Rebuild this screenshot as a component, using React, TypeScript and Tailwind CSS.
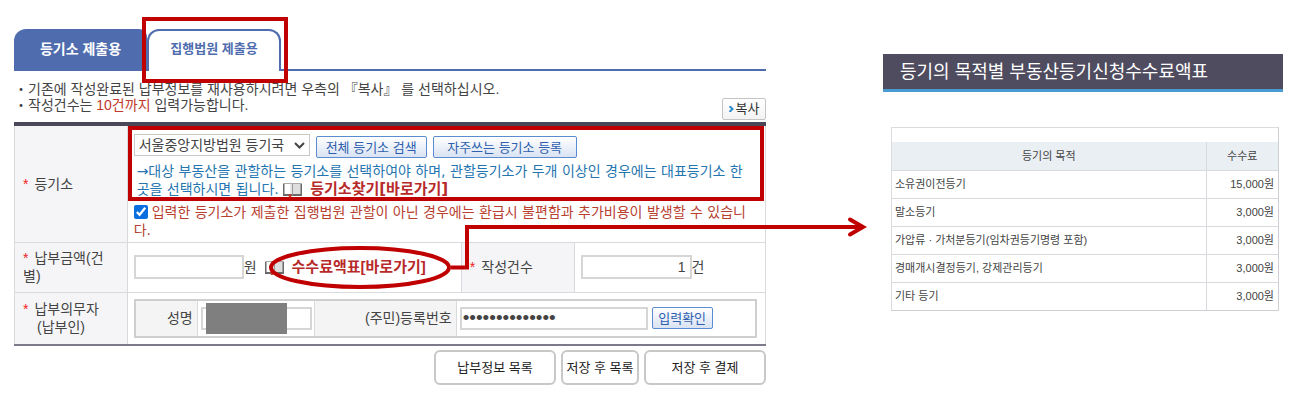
import { type ReactNode } from "react";

function Book() {
  return (
    <svg className="mr-2 inline-block h-[14px] w-[19px] align-[-3px]" viewBox="0 0 19 14" aria-hidden="true">
      <path d="M0 .5h19v12.500H0z" fill="#6a6a6a" />
      <path d="M1.500 1h7.500v10H1.500z" fill="#fff" />
      <path d="M10 1h7.500v10H10z" fill="#dedede" />
      <path d="M7 1h2v10H7z" fill="#e6e6e6" />
      <path d="M1 .5h17" stroke="#aaa" />
      <path d="M9.500 1v11" stroke="#999" />
      <path d="M5 11.500h4L8 14H6z" fill="#c0392b" />
    </svg>
  );
}

function Star() {
  return <span className="mr-[6px] text-[#f02020]">*</span>;
}

function BlueButton({ children, className }: { children: ReactNode; className: string }) {
  return (
    <button
      type="button"
      className={`h-[22px] rounded-xs border border-[#5b8bd0] bg-linear-to-b from-white to-[#d9e3f3] text-[13px] leading-none whitespace-nowrap text-[#2d5fae] ${className}`}
    >
      {children}
    </button>
  );
}

const field = "border-2 border-[#d6d6d6] bg-white px-1 text-[#444] outline-none";
const head = "border border-[#d9d9de] bg-[#f5f5f8] px-2 text-left font-normal";
const cell = "border border-[#d9d9de] px-[6px]";
const link = "text-[15px] font-bold text-[#b72a2a]";

const fees = [
  ["소유권이전등기", "15,000원"],
  ["말소등기", "3,000원"],
  ["가압류 · 가처분등기(임차권등기명령 포함)", "3,000원"],
  ["경매개시결정등기, 강제관리등기", "3,000원"],
  ["기타 등기", "3,000원"],
];

function PaymentForm() {
  return (
    <section className="relative">
      <nav className="flex h-[42px] border-b-2 border-[#4f6dae]">
        <a href="#registry" className="flex w-[133px] items-center justify-center rounded-tl-[12px] rounded-tr-[8px] bg-[#4f6dae] text-[14px] font-bold text-white">
          등기소 제출용
        </a>
        <div className="relative w-[134px]">
          <a href="#court" className="flex h-[42px] items-center justify-center rounded-t-[12px] border-2 border-b-0 border-[#4f6dae] bg-white pb-1 text-[13px] font-bold text-[#4f6dae]">
            집행법원 제출용
          </a>
          <span className="pointer-events-none absolute -top-3 -right-[7px] -bottom-[14px] -left-[5px] z-10 border-4 border-[#c00000]" />
        </div>
      </nav>

      <div className="flex h-[51px] justify-between pt-[10px]">
        <ul className="leading-4">
          <li>・기존에 작성완료된 납부정보를 재사용하시려면 우측의 『복사』 를 선택하십시오.</li>
          <li>・작성건수는 <span className="text-[#c0392b]">10건까지</span> 입력가능합니다.</li>
        </ul>
        <button type="button" className="mb-[2px] flex h-[22px] w-11 items-center justify-center gap-[2px] self-end rounded-xs border border-[#c4c4c4] bg-linear-to-b from-white to-[#f3f3f3] text-[13px] text-[#333]">
          <svg className="h-[6px] w-[5px]" viewBox="0 0 5 6" aria-hidden="true">
            <path d="M.5 0 3.5 3 .5 6" fill="none" stroke="#2d8fd0" strokeWidth="2" />
          </svg>
          복사
        </button>
      </div>

      <table className="w-full table-fixed border-collapse border-t-4 border-b-2 border-t-[#4a4759] border-b-[#7c7b8c]">
        <colgroup>
          <col className="w-[15%]" />
          <col />
          <col className="w-[15%]" />
          <col className="w-[25.5%]" />
        </colgroup>
        <tbody>
          <tr className="h-[118px]">
            <th scope="row" className={head}>
              <Star />
              <label htmlFor="office">등기소</label>
            </th>
            <td colSpan={3} className="relative border border-[#d9d9de] pr-1 pl-[6px] align-top">
              <div className="flex h-9 items-start gap-[6px] pt-2">
                <span className="relative">
                  <select id="office" className="block h-[22px] w-[176px] appearance-none border border-[#c9c9c9] bg-white pl-1 text-[14px] leading-none text-[#444]">
                    <option>서울중앙지방법원 등기국</option>
                  </select>
                  <svg className="pointer-events-none absolute top-2 right-[5px] h-[7px] w-[11px]" viewBox="0 0 11 7" aria-hidden="true">
                    <path d="M1 1l4.500 4.500L10 1" fill="none" stroke="#444" strokeWidth="2" />
                  </svg>
                </span>
                <BlueButton className="mt-[2px] w-[111px]">전체 등기소 검색</BlueButton>
                <BlueButton className="mt-[2px] w-[144px]">자주쓰는 등기소 등록</BlueButton>
              </div>
              <p className="pl-[3px] font-['DejaVu_Sans','Noto_Sans_CJK_KR',sans-serif] text-[#2475b0]">
                →대상 부동산을 관할하는 등기소를 선택하여야 하며, 관할등기소가 두개 이상인 경우에는 대표등기소 한
                <br />
                곳을 선택하시면 됩니다.{" "}
                <a href="#find" className={link}>
                  <Book />
                  등기소찾기[바로가기]
                </a>
              </p>
              <label className="mt-[5px] block font-['DejaVu_Sans','Noto_Sans_CJK_KR',sans-serif] text-[#b8402f]">
                <input type="checkbox" defaultChecked className="mr-1 size-[14px] align-[-2px] accent-[#0b6fe0]" />
                입력한 등기소가 제출한 집행법원 관할이 아닌 경우에는 환급시 불편함과 추가비용이 발생할 수 있습니
                <br />
                다.
              </label>
              <span className="pointer-events-none absolute top-0 right-[1px] left-0 h-[75px] border-4 border-[#c00000]" />
            </td>
          </tr>
          <tr className="h-[50px]">
            <th scope="row" className={head}>
              <Star />
              <label htmlFor="amount">납부금액(건<br />별)</label>
            </th>
            <td className={cell}>
              <div className="flex items-center">
                <input id="amount" className={`${field} h-6 w-[110px] text-[14px]`} />
                <span className="mr-2">원</span>
                <a href="#fees" className={`${link} whitespace-nowrap`}>
                  <Book />
                  수수료액표[바로가기]
                </a>
              </div>
            </td>
            <th scope="row" className={head}>
              <Star />
              <label htmlFor="count">작성건수</label>
            </th>
            <td className={cell}>
              <div className="flex items-center">
                <input id="count" defaultValue="1" className={`${field} h-6 w-[111px] text-right text-[14px]`} />
                <label htmlFor="count">건</label>
              </div>
            </td>
          </tr>
          <tr className="h-[53px]">
            <th scope="row" className={head}>
              <Star />
              납부의무자
              <span className="block pl-[14px]">(납부인)</span>
            </th>
            <td colSpan={3} className={cell}>
              <div className="mr-[2px] flex h-[39px] items-stretch border-2 border-[#cfcfcf]">
                <label htmlFor="payer" className="flex w-[62px] items-center justify-end border-r border-[#d9d9de] bg-[#f4f4f4] pr-1">성명</label>
                <span className="relative flex w-[116px] items-center pl-[3px]">
                  <input id="payer" className={`${field} h-[23px] w-[111px] text-[14px]`} />
                  <span className="absolute top-[2px] left-2 h-[31px] w-[81px] bg-[#7f7f7f]" />
                </span>
                <label htmlFor="regno" className="flex w-[143px] items-center justify-end border-x border-[#d9d9de] bg-[#f4f4f4] pr-1">(주민)등록번호</label>
                <span className="flex flex-1 items-center gap-1 pl-[3px]">
                  <input id="regno" type="password" defaultValue="00000000000000" className="h-[23px] w-[188px] border-2 border-[#d6d6d6] bg-white px-px text-[19px] leading-none text-[#444] outline-none" />
                  <BlueButton className="w-[61px]">입력확인</BlueButton>
                </span>
              </div>
            </td>
          </tr>
        </tbody>
      </table>

      <div className="mt-1 flex justify-end gap-[5px] text-[13px] text-[#222]">
        <button type="button" className="h-[35px] w-[122px] rounded-md border-2 border-[#c8c8c8] bg-white">납부정보 목록</button>
        <button type="button" className="h-[35px] w-[78px] rounded-md border-2 border-[#c8c8c8] bg-white whitespace-nowrap">저장 후 목록</button>
        <button type="button" className="h-[35px] w-[122px] rounded-md border-2 border-[#c8c8c8] bg-white">저장 후 결제</button>
      </div>

      <svg className="pointer-events-none absolute top-[180px] left-[250px] h-[90px] w-[610px]" viewBox="0 0 610 90" fill="none" stroke="#c00000" strokeWidth="4" aria-hidden="true">
        <ellipse cx="96" cy="58.500" rx="89" ry="19.500" />
        <path d="M187 58.500H203V18H599" />
        <path d="M586 10.500 599 18 586 25.500" strokeLinecap="round" />
      </svg>
    </section>
  );
}

function FeeTable() {
  return (
    <section className="pt-[25px]">
      <h2 className="flex h-[38px] items-center border-b-3 border-[#4a9ad4] bg-[#4f4c5f] pl-[17px] text-[18px] text-white">
        등기의 목적별 부동산등기신청수수료액표
      </h2>
      <div className="mt-[35px] mr-[4px] ml-[8px] border border-[#dcdcdf] border-r-[#cfcfd3] border-b-[#cfcfd3] pt-[14px]">
        <table className="w-full border-collapse text-[11px]">
          <thead>
            <tr className="h-7 bg-[#eaeff4]">
              <th className="border-r border-b border-[#d9dade] font-normal">등기의 목적</th>
              <th className="w-[72px] border-b border-[#d9dade] font-normal">수수료</th>
            </tr>
          </thead>
          <tbody>
            {fees.map(([name, fee]) => (
              <tr key={name} className="h-7">
                <td className="border-t border-r border-[#d9dade] pl-[3px]">{name}</td>
                <td className="border-t border-[#d9dade] pr-1 text-right">{fee}</td>
              </tr>
            ))}
          </tbody>
        </table>
      </div>
    </section>
  );
}

export default function App() {
  return (
    <main className="grid grid-cols-[752fr_400fr] gap-x-[117px] bg-white pt-[29px] pr-[15px] pb-4 pl-[14px] font-['Liberation_Sans','Noto_Sans_CJK_KR',sans-serif] text-[14px] leading-[18px] text-[#444]">
      <PaymentForm />
      <FeeTable />
    </main>
  );
}
